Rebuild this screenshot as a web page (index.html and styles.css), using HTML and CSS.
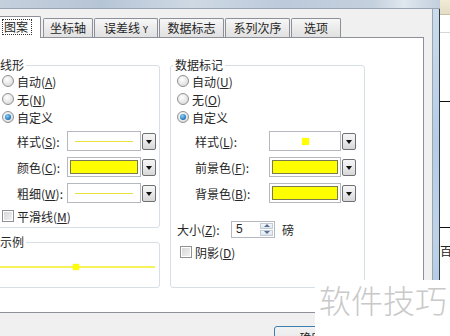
FILE: index.html
```html
<!DOCTYPE html>
<html lang="zh-CN">
<head>
    <meta charset="UTF-8">
    <title>数据系列格式</title>
    <link rel="stylesheet" href="styles.css">
</head>
<body>

<div class="screen">
    <div class="sheet">
        <div class="sheet-head"></div>
        <div class="sheet-row r1"></div>
        <div class="sheet-row r2"></div>
        <div class="sheet-row r3"></div>
        <div class="sheet-text">百</div>
    </div>

    <div class="dialog">
        <div class="titlebar"></div>
        <div class="frame">
            <div class="client">
                <div class="tabs">
                    <div class="tab active"><span class="focus">图案</span></div>
                    <div class="tab w50">坐标轴</div>
                    <div class="tab w64">误差线 <span class="small">Y</span></div>
                    <div class="tab w65">数据标志</div>
                    <div class="tab w65">系列次序</div>
                    <div class="tab w50">选项</div>
                </div>

                <div class="panel">
                    <div class="cols">
                        <div class="col-left">
                            <fieldset class="group g-line">
                                <legend>线形</legend>
                                <div class="opt"><span class="radio"></span>自动(<u>A</u>)</div>
                                <div class="opt"><span class="radio"></span>无(<u>N</u>)</div>
                                <div class="opt"><span class="radio on"></span>自定义</div>

                                <div class="field-row first">
                                    <span class="label">样式(<u>S</u>):</span>
                                    <div class="combo">
                                        <div class="combo-field"><span class="style-line"></span></div>
                                        <div class="combo-btn"><span class="arrow"></span></div>
                                    </div>
                                </div>
                                <div class="field-row">
                                    <span class="label">颜色(<u>C</u>):</span>
                                    <div class="combo">
                                        <div class="combo-field"><span class="swatch"></span></div>
                                        <div class="combo-btn"><span class="arrow"></span></div>
                                    </div>
                                </div>
                                <div class="field-row">
                                    <span class="label">粗细(<u>W</u>):</span>
                                    <div class="combo">
                                        <div class="combo-field"><span class="style-line"></span></div>
                                        <div class="combo-btn"><span class="arrow"></span></div>
                                    </div>
                                </div>

                                <div class="opt check-row"><span class="checkbox"></span>平滑线(<u>M</u>)</div>
                            </fieldset>

                            <fieldset class="group g-sample">
                                <legend>示例</legend>
                                <div class="sample">
                                    <span class="seg seg-left"></span>
                                    <span class="marker"></span>
                                    <span class="seg"></span>
                                </div>
                            </fieldset>
                        </div>

                        <fieldset class="group g-marker">
                            <legend>数据标记</legend>
                            <div class="opt"><span class="radio"></span>自动(<u>U</u>)</div>
                            <div class="opt"><span class="radio"></span>无(<u>O</u>)</div>
                            <div class="opt"><span class="radio on"></span>自定义</div>

                            <div class="field-row first">
                                <span class="label">样式(<u>L</u>):</span>
                                <div class="combo">
                                    <div class="combo-field"><span class="dot"></span></div>
                                    <div class="combo-btn"><span class="arrow"></span></div>
                                </div>
                            </div>
                            <div class="field-row">
                                <span class="label">前景色(<u>F</u>):</span>
                                <div class="combo">
                                    <div class="combo-field"><span class="swatch"></span></div>
                                    <div class="combo-btn"><span class="arrow"></span></div>
                                </div>
                            </div>
                            <div class="field-row">
                                <span class="label">背景色(<u>B</u>):</span>
                                <div class="combo">
                                    <div class="combo-field"><span class="swatch"></span></div>
                                    <div class="combo-btn"><span class="arrow"></span></div>
                                </div>
                            </div>

                            <div class="size-row">
                                <span class="size-label">大小(<u>Z</u>):</span>
                                <div class="spin">
                                    <span class="spin-val">5</span>
                                    <div class="spin-btns">
                                        <span class="spin-btn"><span class="up"></span></span>
                                        <span class="spin-btn"><span class="down"></span></span>
                                    </div>
                                </div>
                                <span class="unit">磅</span>
                            </div>

                            <div class="opt check-row2"><span class="checkbox"></span>阴影(<u>D</u>)</div>
                        </fieldset>
                    </div>
                </div>

                <div class="buttons">
                    <button class="btn-ok">确定</button>
                </div>
            </div>
            <div class="edge"></div>
        </div>
    </div>

    <div class="watermark">软件技巧</div>
</div>

</body>
</html>
```

FILE: styles.css
```css
* {
    box-sizing: border-box;
}
body {
    margin: 0;
    background-color: #fff;
    font-family: "Noto Sans CJK SC", "Noto Sans", sans-serif;
    font-size: 12px;
    color: #262626;
}
u {
    text-decoration-thickness: 1px;
    text-underline-offset: 1px;
}
.screen {
    position: relative;
    width: 450px;
    height: 336px;
    overflow: hidden;
    background-color: #fff;
}

/* spreadsheet behind the dialog */
.sheet {
    position: absolute;
    left: 440px;
    top: 0;
    width: 10px;
    height: 270px;
    background-color: #fff;
}
.sheet-head {
    height: 15px;
    background: linear-gradient(#f1ead6, #e4dcc4);
    border-bottom: 1px solid #c7bfa6;
}
.sheet-row {
    border-bottom: 1px solid #d6d6d6;
}
.sheet-row.r1 {
    height: 18px;
}
.sheet-row.r2 {
    height: 69px;
    border-bottom-color: #111;
}
.sheet-row.r3 {
    height: 126px;
    border-bottom-color: #111;
}
.sheet-text {
    padding-top: 16px;
    line-height: 14px;
    color: #222;
}

/* dialog window */
.dialog {
    position: absolute;
    left: -12px;
    top: 0;
    width: 452px;
    height: 336px;
}
.titlebar {
    height: 9px;
    background: linear-gradient(90deg, #c6d1dd, #b6c5d6 25%, #cfd9e4 45%, #bccadb 65%, #c4d0dd 85%, #dfe7ef 92%, #c2cfdc);
    border-bottom: 1px solid #98a4b3;
}
.frame {
    display: flex;
    height: 327px;
}
.client {
    flex: 1;
    background-color: #f0f0f0;
    padding: 7px 8px 0 0;
}
.edge {
    width: 8px;
    border-left: 1px solid #9ea3aa;
    border-right: 1px solid #3a3a3a;
    background: linear-gradient(#c9dcef, #b3cde8 40%, #bcd3ea 70%, #a9c6e4);
}

/* tabs */
.tabs {
    display: flex;
    align-items: flex-end;
    height: 21px;
    padding-left: 4px;
    position: relative;
    z-index: 1;
}
.tab {
    height: 19px;
    margin-left: 1px;
    border: 1px solid #8d9099;
    border-bottom: none;
    border-radius: 2px 2px 0 0;
    background: linear-gradient(#f7f7f7, #ebebeb 50%, #e1e1e1);
    text-align: center;
    line-height: 17px;
    white-space: nowrap;
}
.tab.active {
    width: 49px;
    height: 22px;
    margin: 0 1px -1px 0;
    background: #fff;
    line-height: 19px;
    text-align: left;
    padding-left: 9px;
}
.focus {
    display: inline-block;
    padding: 0 3px 0 1px;
    line-height: 14px;
    border: 1px dotted #333;
}
.w50 {
    width: 50px;
}
.w64 {
    width: 64px;
}
.w65 {
    width: 65px;
}
.small {
    font-family: "DejaVu Sans Mono", monospace;
    font-size: 9px;
}

/* tab page */
.panel {
    height: 276px;
    background-color: #fff;
    border: 1px solid #8d9099;
    padding: 20px 0 0 3px;
}
.cols {
    display: flex;
    gap: 10px;
}
.col-left {
    width: 168px;
}
.group {
    margin: 0;
    padding: 0 0 3px 0;
    border: 1px solid #d5dfe5;
    border-radius: 3px;
}
.group legend {
    padding: 0 2px;
    margin-left: 5px;
    line-height: 14px;
}
.g-marker {
    width: 195px;
    height: 230px;
}
.g-marker legend {
    margin-left: 2px;
}
.g-sample {
    margin-top: 7px;
    height: 53px;
}

.opt {
    display: flex;
    align-items: center;
    height: 18px;
    padding-left: 9px;
    white-space: nowrap;
}
.g-marker .opt {
    padding-left: 6px;
}
.radio {
    width: 12px;
    height: 12px;
    margin-right: 3px;
    border: 1px solid #8f9194;
    border-radius: 50%;
    background: radial-gradient(circle at 40% 35%, #fff, #e4e4e4 60%, #cfcfcf);
    display: flex;
    align-items: center;
    justify-content: center;
}
.radio.on::after {
    content: "";
    width: 6px;
    height: 6px;
    border-radius: 50%;
    background: radial-gradient(circle at 40% 35%, #8fd3f5, #2a7fc4 60%, #124b86);
}
.checkbox {
    width: 12px;
    height: 12px;
    margin-right: 3px;
    border: 1px solid #8f9194;
    background: linear-gradient(135deg, #d4d4d4, #f4f4f4);
    box-shadow: inset 0 0 0 1px #fff;
}
.check-row {
    margin-top: 5px;
    height: 16px;
}
.check-row2 {
    margin-top: 6px;
    height: 16px;
}
.g-marker .check-row2 {
    padding-left: 9px;
}

.field-row {
    display: flex;
    align-items: center;
    height: 20px;
    margin-top: 6px;
    padding-left: 24px;
    white-space: nowrap;
}
.field-row.first {
    margin-top: 5px;
}
.label {
    width: 50px;
}
.g-marker .label {
    width: 74px;
}
.combo {
    display: flex;
    align-items: center;
    gap: 1px;
}
.combo-field {
    width: 74px;
    height: 20px;
    border: 1px solid #b5b8bf;
    background-color: #fff;
    display: flex;
    align-items: center;
    justify-content: center;
    padding: 2px;
}
.g-marker .combo-field {
    width: 72px;
}
.combo-btn {
    width: 14px;
    height: 17px;
    border: 1px solid #6f7074;
    border-radius: 2px;
    background: linear-gradient(#f6f6f6, #e9e9e9 50%, #d6d6d6);
    display: flex;
    align-items: center;
    justify-content: center;
}
.arrow {
    width: 0;
    height: 0;
    border-left: 3px solid transparent;
    border-right: 3px solid transparent;
    border-top: 4px solid #111;
    margin-top: 1px;
}
.style-line {
    width: 58px;
    height: 1px;
    background-color: #e8e23a;
}
.swatch {
    align-self: stretch;
    flex: 1;
    background-color: #ffff00;
    border: 1px solid #7a7a50;
}
.dot {
    width: 7px;
    height: 7px;
    background-color: #ffff00;
    box-shadow: 0 0 1px #f2f27a;
}

.size-row {
    display: flex;
    align-items: center;
    height: 18px;
    margin-top: 17px;
    padding-left: 6px;
    white-space: nowrap;
}
.size-label {
    width: 54px;
}
.spin {
    display: flex;
    width: 44px;
    height: 17px;
    border: 1px solid #b5b8bf;
    background-color: #fff;
}
.spin-val {
    flex: 1;
    padding-left: 4px;
    line-height: 15px;
    font-family: "Liberation Sans", Arial, sans-serif;
    font-size: 12px;
}
.spin-btns {
    width: 15px;
    display: flex;
    flex-direction: column;
    gap: 1px;
    padding: 1px;
}
.spin-btn {
    flex: 1;
    border: 1px solid #c3cbd6;
    background: linear-gradient(#f5f8fb, #dde5ee);
    display: flex;
    align-items: center;
    justify-content: center;
}
.up {
    border-left: 3px solid transparent;
    border-right: 3px solid transparent;
    border-bottom: 3px solid #5a6f94;
}
.down {
    border-left: 3px solid transparent;
    border-right: 3px solid transparent;
    border-top: 3px solid #5a6f94;
}
.unit {
    margin-left: 7px;
}

.sample {
    display: flex;
    align-items: center;
    height: 35px;
    padding: 0 4px 0 0;
}
.seg {
    flex: 1;
    height: 2px;
    background-color: #f6f25a;
}
.seg-left {
    flex: 0 0 80px;
}
.marker {
    width: 6px;
    height: 6px;
    background-color: #ffff00;
    box-shadow: 0 0 1px #e0d83a;
}

/* bottom buttons */
.buttons {
    padding: 13px 0 0 286px;
}
.btn-ok {
    width: 75px;
    height: 23px;
    border: 1px solid #3c7fb1;
    border-radius: 3px;
    background: linear-gradient(#f2f2f2, #ebebeb 50%, #dddddd 50%, #cfcfcf);
    font-family: "Noto Sans CJK SC", sans-serif;
    font-size: 12px;
    color: #222;
    padding: 0;
}

/* watermark over the corner */
.watermark {
    position: absolute;
    left: 315px;
    top: 280px;
    right: 0;
    bottom: 0;
    background-color: #fff;
    color: #c9c9c9;
    font-size: 32px;
    font-weight: 300;
    line-height: 38px;
    padding: 0 0 0 4px;
    white-space: nowrap;
}
```
